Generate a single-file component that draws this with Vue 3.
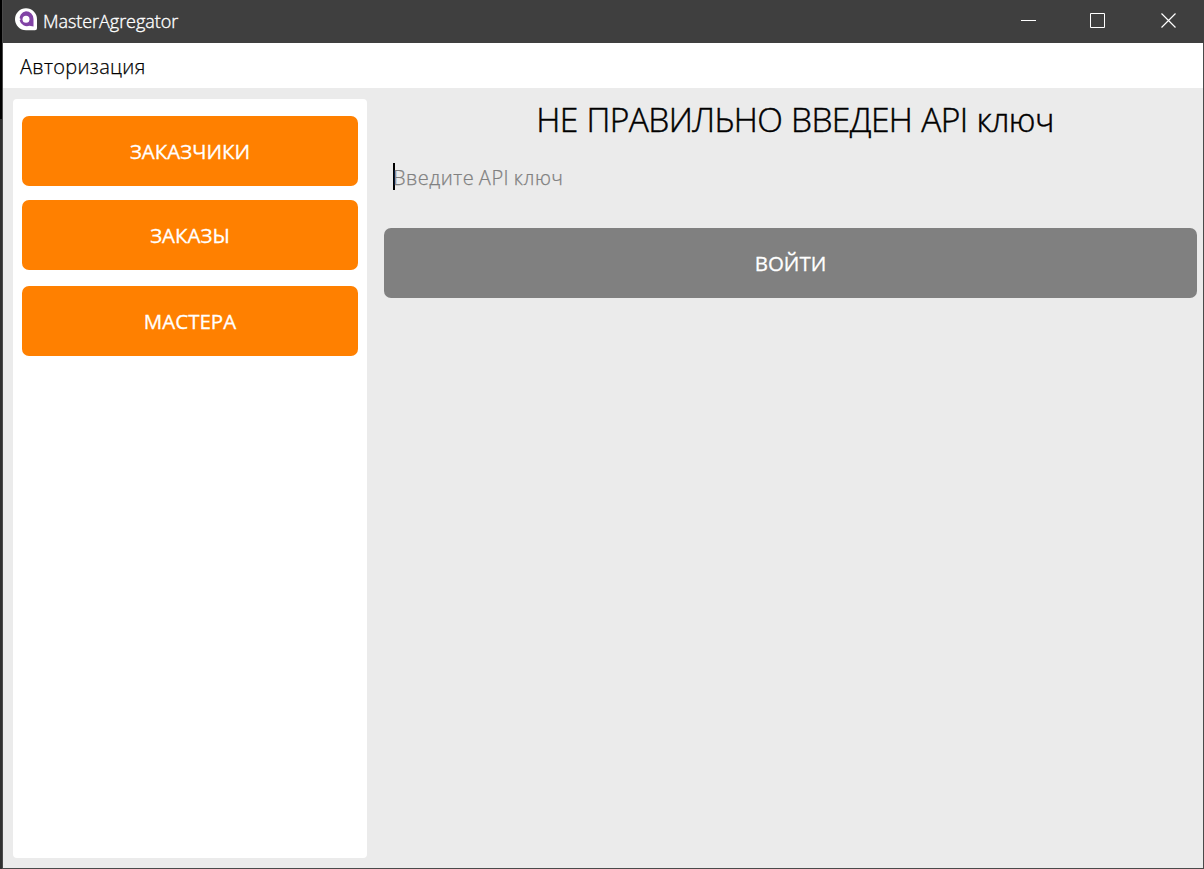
<script setup>
const nav = ['ЗАКАЗЧИКИ', 'ЗАКАЗЫ', 'МАСТЕРА']
</script>

<template>
  <div class="screen">
    <div class="backdrop"></div>
    <div class="window">
      <header class="titlebar">
        <svg class="logo" width="24" height="24" viewBox="0 0 24 24">
          <path d="M11 .3a11 11 0 1 0 0 22H20a2 2 0 0 0 2-2V11.300a11 11 0 0 0-11-11Z" fill="#fff" />
          <path d="M11 3.300a7.500 7.500 0 1 0 3.500 14.500L18.500 18.500V11a7.500 7.700 0 0 0-7.500-7.700Z" fill="#8143a5" />
          <circle cx="11" cy="11.300" r="3.500" fill="#fff" />
          <circle cx="4.500" cy="11.300" r="1" fill="#fff" />
        </svg>
        <span class="app-name">MasterAgregator</span>
        <div class="controls">
          <svg width="16" height="16" viewBox="0 0 16 16"><path d="M1 8.500h15" stroke="#fff" /></svg>
          <svg width="16" height="16" viewBox="0 0 16 16"><path d="M.5 1.500h14v14h-14z" fill="none" stroke="#fff" /></svg>
          <svg width="16" height="16" viewBox="0 0 16 16"><path d="M1.500 1.500l14 14M15.500 1.500l-14 14" stroke="#fff" stroke-width="1.200" /></svg>
        </div>
      </header>
      <nav class="menu">Авторизация</nav>
      <main class="body">
        <aside class="side">
          <button v-for="n in nav" :key="n" class="btn">{{ n }}</button>
        </aside>
        <section class="content">
          <h1 class="heading">НЕ ПРАВИЛЬНО ВВЕДЕН API ключ</h1>
          <div class="field"><i class="caret"></i><span>Введите API ключ</span></div>
          <button class="btn login">ВОЙТИ</button>
        </section>
      </main>
    </div>
  </div>
</template>

<style>
html, body { margin: 0; overflow: hidden; }
</style>
<style scoped>
.screen { display: flex; width: 1204px; height: 869px; font-family: "Open Sans", "Noto Sans", sans-serif; font-weight: 300; }
.backdrop { width: 2px; background: linear-gradient(#000 119px, #303030 119px); }
.window { box-sizing: border-box; width: 1202px; border: 1px solid #4a4a4a; border-top: 0; display: flex; flex-direction: column; background: #ebebeb; }
.titlebar { height: 43px; margin: 0 -1px 0 0; background: #3f3f3f; display: flex; align-items: center; box-sizing: border-box; padding: 0 28px 3px 12px; color: #fff; }
.app-name { margin: 2px 0 0 4px; font-size: 18px; font-weight: 300; letter-spacing: -.05px; line-height: 24px; -webkit-text-stroke: .35px #fff; }
.controls { margin-left: auto; display: flex; gap: 54px; }
.menu { height: 45px; background: #fff; padding-left: 17px; line-height: 48px; font-size: 20px; letter-spacing: .32px; color: #000; -webkit-text-stroke: .25px #000; }
.body { flex: 1; display: flex; padding: 11px 6px 10px 10px; gap: 17px; }
.side { box-sizing: border-box; width: 354px; background: #fff; border-radius: 4px; padding: 17px 9px; display: flex; flex-direction: column; gap: 14px; }
.btn { display: flex; align-items: center; justify-content: center; width: 100%; height: 70px; border: 0; border-radius: 7px; background: #ff8000; color: #fff; font: 400 20.500px/28px "Open Sans", "Noto Sans", sans-serif; padding: 0; flex: none; -webkit-text-stroke: .3px #fff; }
.btn:nth-child(3) { margin-top: 2px; }
.content { flex: 1; display: flex; flex-direction: column; }
.heading { margin: 0; height: 46px; font-size: 33.500px; font-weight: 300; letter-spacing: -.62px; word-spacing: .8px; line-height: 41px; text-align: center; padding-left: 9px; -webkit-text-stroke: .45px #000; }
.field { display: flex; align-items: center; height: 30px; margin: 18px 0 35px 9px; font-size: 20px; letter-spacing: .5px; word-spacing: -1px; line-height: 30px; color: #808080; -webkit-text-stroke: .25px #808080; }
.caret { width: 2px; height: 27px; background: #000; margin: -3px -2px 0 0; }
.content .login { background: #808080; margin: 0; }
</style>
